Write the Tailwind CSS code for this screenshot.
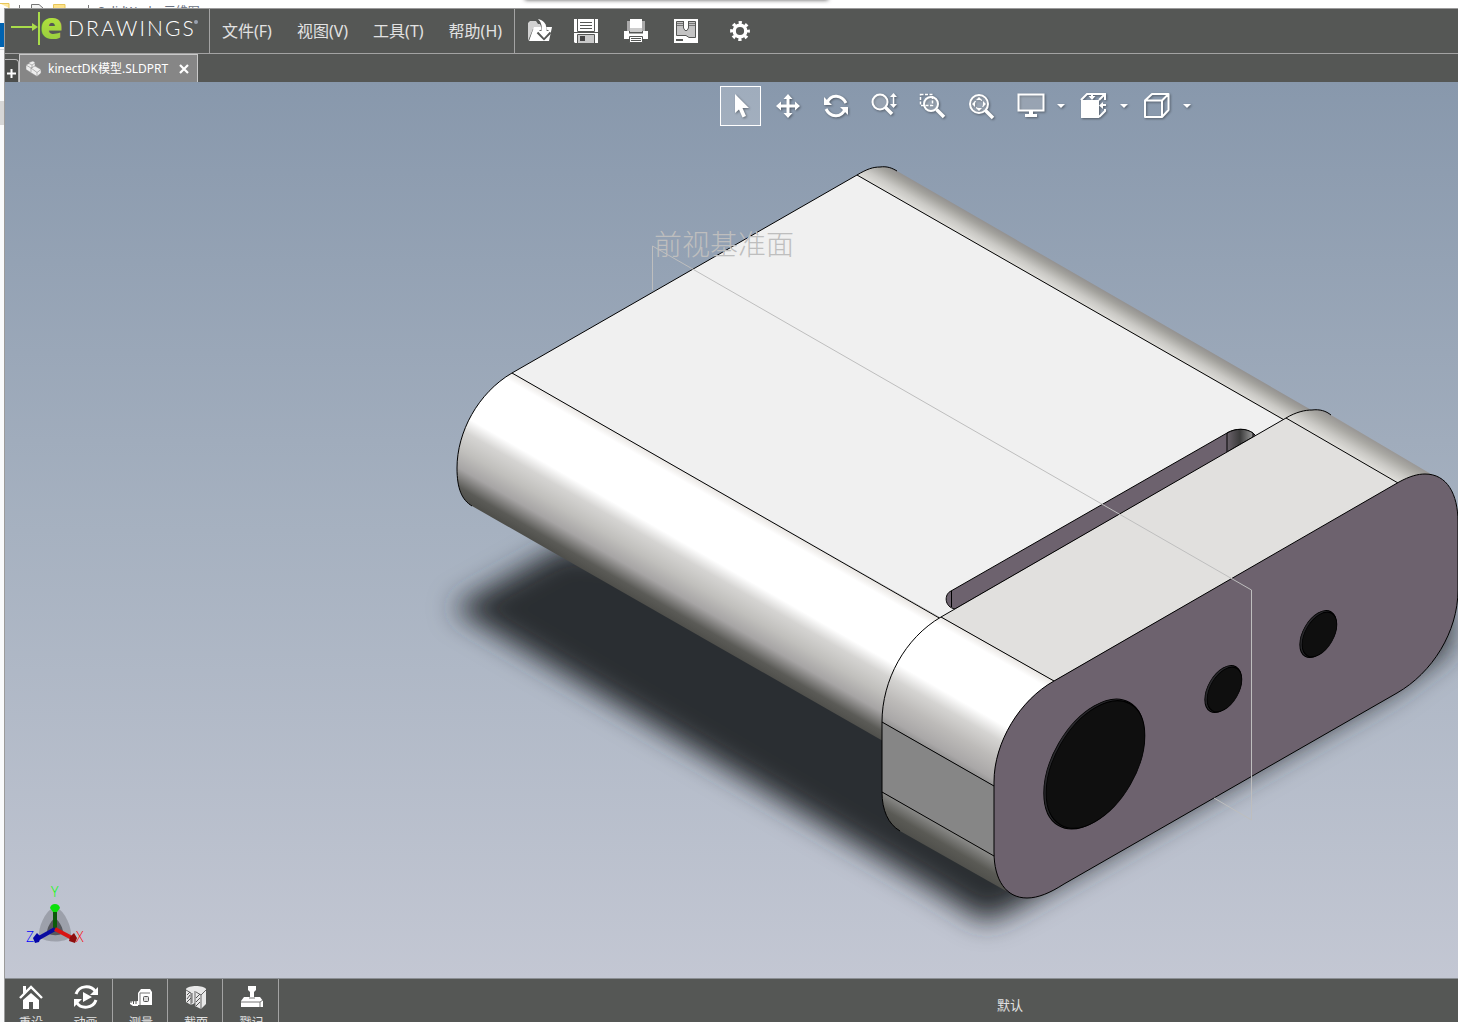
<!DOCTYPE html>
<html lang="zh-CN">
    <head>
        <meta charset="UTF-8">
        <meta name="viewport" content="width=device-width, initial-scale=1.0">
        <title>eDrawings - kinectDK模型.SLDPRT</title>
        <script src="https://cdn.jsdelivr.net/npm/@tailwindcss/browser@4"></script>
    </head>
    <body class="h-screen flex flex-col overflow-hidden bg-white text-white font-['Noto_Sans','Noto_Sans_CJK_SC',sans-serif]">
        <!-- Window behind, top edge -->
        <div class="relative h-2 shrink-0 flex overflow-hidden text-xs text-gray-500">
            <svg class="w-[92px] h-2 shrink-0" viewBox="0 0 92 8">
                <path d="M0 3.500H9V8" fill="#ffe9a2" stroke="#e8c65a"/>
                <path d="M19.500 5V8M88.500 5V8" stroke="#777"/>
                <path d="M31.500 8V4.500H39L43 8" fill="#f4f4f4" stroke="#777"/>
                <path d="M53.500 8V4.500H65V8" fill="#ffe38a" stroke="#e8c65a"/>
            </svg>
            <span class="pl-1.5 pt-1 leading-4 whitespace-nowrap">SolidWorks 三维图</span>
            <div class="absolute left-[36%] w-[303px] -top-2 h-2 bg-gray-400 shadow-[0_0_4px_#555]"></div>
        </div>

        <div class="flex-1 min-h-0 flex">
            <!-- Window behind, left edge -->
            <div class="w-1 shrink-0 bg-gray-50">
                <div class="mt-[15px] h-6 bg-[#0063b1]"></div>
                <div class="mt-0.5 h-px bg-gray-300"></div>
                <div class="mt-[51px] h-6 bg-[#d6d6d6]"></div>
            </div>

            <div class="flex-1 min-w-0 flex flex-col border-l border-t border-[#9b9b9b] bg-[#555755]">
                <header class="h-[45px] shrink-0 flex border-b border-[#a3a3a3]">
                    <div class="w-[205px] flex border-r border-[#a3a3a3]">
                        <svg class="w-[60px] h-11 shrink-0 overflow-visible" viewBox="5 9 60 44">
                            <defs>
                                <linearGradient id="lime" x1="0" y1="0" x2="0" y2="1">
                                    <stop offset="0" stop-color="#c3f03c"/>
                                    <stop offset="1" stop-color="#8fc63f"/>
                                </linearGradient>
                            </defs>
                            <path d="M11 26H32V23L38 27L32 31V28H11Z" fill="#a9dc4a"/>
                            <rect x="38" y="12" width="2" height="33" fill="#a9dc4a"/>
                            <text x="40" y="39" font-family="Open Sans" font-weight="800" font-size="37" fill="url(#lime)">e</text>
                        </svg>
                        <div class="flex items-start pt-[5px] pl-[3px] font-['Lato']">
                            <span class="text-[21px] leading-7 tracking-widest font-light">DRAWINGS</span>
                            <span class="w-1 h-1 mt-1.5 -ml-0.5 rounded-full bg-gray-400"></span>
                        </div>
                    </div>
                    <nav class="w-[305px] flex items-center gap-[25px] pl-3 border-r border-[#a3a3a3] text-base leading-5 text-[#e2e2e2] whitespace-nowrap">
                        <button>文件(F)</button>
                        <button>视图(V)</button>
                        <button>工具(T)</button>
                        <button>帮助(H)</button>
                    </nav>
                    <div class="flex items-center pl-[13px] gap-[26px]">
                        <button aria-label="打开" class="-mr-1">
                            <svg class="w-6 h-6" viewBox="0 0 24 24">
                                <path d="M0 22V4L2 2H8L10 5H18V10H5Z" fill="#d2d2d2"/>
                                <path d="M1 22L6 8H24L21 22Z" fill="#fff"/>
                                <path d="M11 1C15 3 17 7 16 17M10.500 12.500L16 18L21.500 12.500" fill="none" stroke="#555755" stroke-width="5"/>
                                <path d="M10 0C15 1 19 4 18.500 12H22.500L16 19L9.500 12H14C14 6 13 3 10 0Z" fill="#fff"/>
                            </svg>
                        </button>
                        <button aria-label="保存">
                            <svg class="w-6 h-6" viewBox="0 0 24 24">
                                <path d="M0 0H24V24H1L0 23Z" fill="#fff"/>
                                <path d="M3.500 0V12.500H20.500V0M6 3.500H18M6 6.500H18M6 9.500H18" fill="none" stroke="#555755"/>
                                <path d="M0 13.500H24" stroke="#555755"/>
                                <path d="M3.500 24V15.500H20.500V24" fill="#c9c9c9" stroke="#555755"/>
                                <rect x="6" y="17" width="5" height="5" fill="#444"/>
                            </svg>
                        </button>
                        <button aria-label="打印">
                            <svg class="w-6 h-6" viewBox="0 0 24 24">
                                <path d="M3 2H6V12H3ZM18 2H21V12H18Z" fill="#aaa"/>
                                <path d="M6 0H18V12H6Z" fill="#fff"/>
                                <path d="M6 9H18V13H6Z" fill="#ccc"/>
                                <path d="M0 12H5V14.500H19V12H24V20H0Z" fill="#fff"/>
                                <path d="M5.500 17.500H18.500V23.500H5.500Z" fill="#fff" stroke="#555755"/>
                                <path d="M7 19.500H17M7 21.500H17" stroke="#555755"/>
                            </svg>
                        </button>
                        <button aria-label="3D 打印">
                            <svg class="w-6 h-6" viewBox="0 0 24 24">
                                <path d="M0 0H24V24H0Z" fill="#fff"/>
                                <path d="M2.500 2.500H21.500V18.500H15L12 16.500H2.500Z" fill="#c4c4c4" stroke="#555755"/>
                                <path d="M3 4.500H21M3 6.500H21" stroke="#777"/>
                                <path d="M9.500 2V9L11 11.500H13L14.500 9V2" fill="#fff" stroke="#555755"/>
                                <path d="M2 21H9" stroke="#555755" stroke-width="2"/>
                            </svg>
                        </button>
                        <button aria-label="选项" class="pl-1.5">
                            <svg class="w-5 h-5" viewBox="0 0 20 20" fill="none" stroke="#fff">
                                <circle cx="10" cy="10" r="5.800" stroke-width="3.400"/>
                                <circle cx="10" cy="10" r="8.300" stroke-width="3.200" stroke-dasharray="3.200 3.319" stroke-dashoffset="1.600"/>
                            </svg>
                        </button>
                    </div>
                </header>

                <div class="h-7 shrink-0 flex items-end">
                    <button aria-label="新建标签" class="w-3.5 h-[23px] flex items-end justify-center pb-1 border-t border-r border-[#b5b5b5] rounded-tr bg-[#4c4e4c]">
                        <svg class="w-[9px] h-[9px]" viewBox="0 0 9 9"><path d="M4.500 0V9M0 4.500H9" stroke="#fff" stroke-width="2"/></svg>
                    </button>
                    <div class="w-[179px] h-7 flex items-center pl-1.5 border border-b-0 border-[#c9c9c9] bg-[#868686]">
                        <svg class="w-4 h-4 shrink-0" viewBox="0 0 16 16" stroke="#8c8c8c" stroke-width=".5">
                            <path d="M0 4L3 2.500V1.500L7 0L9 1.500V5L15 8.500V12L11 15.500L0 8.500Z" fill="#eee"/>
                            <path d="M3 2.500L6 4L9 2M0 4L5 7L9 5M5 7V11M6 4V7M5 7L11 11.500L15 8.500M11 11.500V15.500" fill="none" stroke="#777"/>
                        </svg>
                        <span class="ml-1.5 text-xs leading-5 whitespace-nowrap">kinectDK模型.SLDPRT</span>
                        <button aria-label="关闭" class="ml-auto mr-2">
                            <svg class="w-[10px] h-[10px]" viewBox="0 0 10 10"><path d="M1 1L9 9M9 1L1 9" stroke="#fff" stroke-width="2.200"/></svg>
                        </button>
                    </div>
                </div>

                <main class="relative flex-1 min-h-0 bg-linear-to-b from-[#8898ac] via-[#a6b1c0] to-[#c3c7d3]">
                    <!-- 3D view -->
                    <svg class="block w-full h-full" viewBox="5 82 1453 896" preserveAspectRatio="xMinYMin slice">
                        <defs>
                            <filter id="soft" x="-20%" y="-20%" width="140%" height="140%"><feGaussianBlur stdDeviation="14"/></filter>
                            <linearGradient id="bodySide" gradientUnits="userSpaceOnUse" x1="512" y1="373" x2="444" y2="490.800">
                                <stop offset="0" stop-color="#ebe8e5"/>
                                <stop offset=".06" stop-color="#fff"/>
                                <stop offset=".45" stop-color="#fff"/>
                                <stop offset=".55" stop-color="#d5d4d2"/>
                                <stop offset=".68" stop-color="#c0bfbc"/>
                                <stop offset=".8" stop-color="#a6a4a4"/>
                                <stop offset=".92" stop-color="#5b5b57"/>
                                <stop offset="1" stop-color="#4c4c48"/>
                            </linearGradient>
                            <linearGradient id="boxSide" gradientUnits="userSpaceOnUse" x1="941" y1="617" x2="873" y2="734.800">
                                <stop offset="0" stop-color="#ebe8e5"/>
                                <stop offset=".06" stop-color="#fff"/>
                                <stop offset=".46" stop-color="#fff"/>
                                <stop offset=".57" stop-color="#d5d4d2"/>
                                <stop offset=".7" stop-color="#bdbbb9"/>
                                <stop offset=".84" stop-color="#a9a7a7"/>
                                <stop offset=".91" stop-color="#888"/>
                            </linearGradient>
                            <linearGradient id="boxUnder" gradientUnits="userSpaceOnUse" x1="882" y1="792" x2="868" y2="816">
                                <stop offset="0" stop-color="#888886"/>
                                <stop offset=".5" stop-color="#5a5a55"/>
                                <stop offset="1" stop-color="#4c4c48"/>
                            </linearGradient>
                            <linearGradient id="bodyFar" gradientUnits="userSpaceOnUse" x1="857" y1="175" x2="869" y2="154.200">
                                <stop offset="0" stop-color="#e0dfdb"/>
                                <stop offset=".35" stop-color="#cac9c5"/>
                                <stop offset=".75" stop-color="#a3a29d"/>
                                <stop offset="1" stop-color="#92908f"/>
                            </linearGradient>
                            <linearGradient id="boxFar" gradientUnits="userSpaceOnUse" x1="1286" y1="418" x2="1298" y2="397.200">
                                <stop offset="0" stop-color="#e0dfdb"/>
                                <stop offset=".35" stop-color="#cac9c5"/>
                                <stop offset=".75" stop-color="#a9a8a3"/>
                                <stop offset="1" stop-color="#9a9896"/>
                            </linearGradient>
                            <linearGradient id="slotEnd">
                                <stop offset="0" stop-color="#6a626a"/>
                                <stop offset=".5" stop-color="#3b3b3b"/>
                                <stop offset="1" stop-color="#999"/>
                            </linearGradient>
                        </defs>

                        <!-- Floor shadow -->
                        <path d="M452 608L565 545L1000 600L1450 600V648L1392 692L1016 908L985 922L930 888Z" fill="#2c2d30" filter="url(#soft)"/>

                        <!-- Main body -->
                        <path d="M857 175C867 169 873 167 880 167C887 166 892 168 897 171L1320 415L1286 425Z" fill="url(#bodyFar)"/>
                        <path d="M512 373C478 393 457 432 457 468C457 489 462 500 472 506L890 745L941 618Z" fill="url(#bodySide)"/>
                        <path d="M512 373L857 175L1283 420L941 618Z" fill="#f0f0f0"/>
                        <path d="M472 506C462 500 457 489 457 468C457 432 478 393 512 373L857 175C867 169 873 167 880 167C887 166 892 168 897 171M512 373L941 619M857 175L1286 421" fill="none" stroke="#000"/>

                        <!-- Slot -->
                        <path d="M955 609C944 607 944 594 951 591L1227 433C1236 428 1246 428 1254 434L1256 436Z" fill="#6d626e" stroke="#000"/>
                        <path d="M1227 433C1236 428 1246 428 1253 433V437L1227 452Z" fill="url(#slotEnd)" stroke="#000"/>
                        <path d="M951.500 591V607" stroke="#000"/>

                        <!-- Sensor head -->
                        <path d="M1286 418C1296 412 1305 410 1312 410C1320 409 1326 411 1331 415L1436 477L1398 490Z" fill="url(#boxFar)"/>
                        <path d="M941 617C905 638 882 680 882 722L994 786L1054 681Z" fill="url(#boxSide)"/>
                        <path d="M994 782C994 742 1020 700 1054 681L1070 700L1010 800Z" fill="#6d626e"/>
                        <path d="M941 617L1286 418L1398 483L1054 681Z" fill="#e1e0de"/>
                        <path d="M882 722L994 786V856L882 792Z" fill="#868686"/>
                        <path d="M882 792C882 810 888 824 900 831L1006 891L994 855Z" fill="url(#boxUnder)"/>
                        <path d="M900 831C888 824 882 810 882 792V722C882 680 905 638 941 617L1286 418C1296 412 1305 410 1312 410C1320 409 1326 411 1331 415M941 617L1054 681M1286 418L1398 483M882 722L994 786M882 792L994 856" fill="none" stroke="#000"/>
                        <path d="M1054 681L1399 482C1410 476 1418 474 1425 474C1447 474 1458 494 1458 522V590C1458 632 1432 673 1397 693L1064 884C1050 893 1038 898 1027 898C1006 898 994 880 994 852V782C994 742 1020 700 1054 681Z" fill="#6d626e" stroke="#000"/>

                        <!-- Lenses -->
                        <g stroke="#000">
                            <circle r="58" fill="#27272a" transform="matrix(.866 -.5 0 1 1094 764)"/>
                            <circle r="57" fill="#0f0f0f" transform="matrix(.866 -.5 0 1 1095.500 764.500)"/>
                            <circle r="21" fill="#27272a" transform="matrix(.866 -.5 0 1 1223 689)"/>
                            <circle r="20" fill="#0f0f0f" transform="matrix(.866 -.5 0 1 1224.500 689.500)"/>
                            <circle r="21" fill="#27272a" transform="matrix(.866 -.5 0 1 1318 634)"/>
                            <circle r="20" fill="#0f0f0f" transform="matrix(.866 -.5 0 1 1319.500 634.500)"/>
                        </g>

                        <!-- Front plane -->
                        <path d="M652.500 290V246L1251.500 590V820L1214 798" fill="none" stroke="#bebebe"/>
                        <text x="654" y="255" font-family="Noto Sans CJK SC" font-weight="300" font-size="28" fill="#bebebe">前视基准面</text>

                        <!-- Axis triad -->
                        <path d="M55 906C44 912 38 928 39 937C47 943 64 943 71 937C72 928 66 912 55 906Z" fill="#000" opacity=".18"/>
                        <path d="M55 918C50 922 47 928 47 933C52 936 59 936 63 933C63 928 60 922 55 918Z" fill="#000" opacity=".45"/>
                        <path d="M55 929V911" stroke="#0b5a0b" stroke-width="4"/>
                        <path d="M50 908Q51 904 55 904Q59 904 60 908L57 912H53Z" fill="#0be00b"/>
                        <path d="M55 929L39 938" stroke="#0a0aa0" stroke-width="4"/>
                        <path d="M33 938L37 933L41 937L39 942L35 943Z" fill="#0606a8"/>
                        <path d="M55 929L72 938" stroke="#d81414" stroke-width="4"/>
                        <path d="M70 937L74 933L77 938L75 943L69 941Z" fill="#8f0d0d"/>
                        <g font-family="Open Sans" font-size="14" font-weight="300">
                            <text x="51" y="897" fill="#0f0">Y</text>
                            <text x="26" y="942" fill="#00f">Z</text>
                            <text x="76" y="942" fill="#f00">X</text>
                        </g>
                    </svg>

                    <!-- View toolbar -->
                    <div class="absolute top-1 left-[715px] flex items-center gap-[7px] [&_svg]:drop-shadow-[1px_1px_1px_#0006]">
                        <button aria-label="选择" class="w-[41px] h-10 flex items-center justify-center border border-white bg-white/20">
                            <svg class="w-7 h-7" viewBox="0 0 28 28"><path d="M8 2V21L12 17.500L15.500 25.500L19 24L15.500 16H22Z" fill="#fff"/></svg>
                        </button>
                        <button aria-label="平移" class="w-10 mr-px h-10 flex items-center justify-center">
                            <svg class="w-7 h-7" viewBox="0 0 28 28">
                                <path d="M14 6V22M6 14H22" stroke="#fff" stroke-width="3"/>
                                <path d="M14 2L18.500 7H9.500ZM14 26L18.500 21H9.500ZM2 14L7 9.500V18.500ZM26 14L21 9.500V18.500Z" fill="#fff"/>
                            </svg>
                        </button>
                        <button aria-label="旋转" class="w-10 mr-px h-10 flex items-center justify-center">
                            <svg class="w-7 h-7" viewBox="0 0 28 28">
                                <path d="M5 11C9 1 20 3 24 11M23 17C19 27 8 25 4 17" fill="none" stroke="#fff" stroke-width="3"/>
                                <path d="M2 5V13H10ZM26 23V15H18Z" fill="#fff"/>
                            </svg>
                        </button>
                        <button aria-label="缩放" class="w-10 mr-px h-10 flex items-center justify-center">
                            <svg class="w-7 h-7" viewBox="0 0 28 28">
                                <circle cx="10" cy="10" r="7.500" fill="#fff3" stroke="#fff" stroke-width="2"/>
                                <path d="M15.500 15.500L22 22" stroke="#fff" stroke-width="3.500"/>
                                <path d="M23.500 4V14" stroke="#fff" stroke-width="1.500"/>
                                <path d="M23.500 1L27 5H20ZM23.500 16L27 12H20Z" fill="#fff"/>
                            </svg>
                        </button>
                        <button aria-label="局部放大" class="w-10 mr-px h-10 flex items-center justify-center">
                            <svg class="w-7 h-7" viewBox="0 0 28 28">
                                <path d="M2.500 2.500H14.500V13.500H2.500Z" fill="none" stroke="#fff" stroke-width="1.500" stroke-dasharray="3 1.500"/>
                                <circle cx="13" cy="12" r="7" fill="#fff3" stroke="#fff" stroke-width="2"/>
                                <path d="M18.500 17.500L26 25" stroke="#fff" stroke-width="3.500"/>
                            </svg>
                        </button>
                        <button aria-label="整屏显示" class="w-[41px] h-10 flex items-center justify-center">
                            <svg class="w-7 h-7" viewBox="0 0 28 28">
                                <circle cx="12" cy="12" r="9" fill="#fff3" stroke="#fff" stroke-width="2"/>
                                <path d="M12 5L15 8H9ZM12 19L15 16H9ZM5 12L8 9V15ZM19 12L16 9V15Z" fill="#fff"/>
                                <circle cx="12" cy="12" r="4.500" fill="none" stroke="#fff" stroke-dasharray="3 4"/>
                                <path d="M18.500 18.500L26 26" stroke="#fff" stroke-width="3.500"/>
                            </svg>
                        </button>
                        <div class="flex pl-0.5 gap-[3px]">
                            <div class="flex">
                                <button aria-label="显示" class="w-[41px] h-10 flex items-center justify-center">
                                    <svg class="w-7 h-7" viewBox="0 0 28 28">
                                        <path d="M1.500 2.500H26.500V18.500H1.500Z" fill="#fff3" stroke="#fff" stroke-width="2"/>
                                        <path d="M12 19H16V22H20V25H8V22H12Z" fill="#fff"/>
                                    </svg>
                                </button>
                                <button aria-label="显示选项" class="w-5 flex items-center justify-center">
                                    <svg class="w-2 h-1" viewBox="0 0 8 4"><path d="M0 0H8L4 4Z" fill="#fff"/></svg>
                                </button>
                            </div>
                            <div class="flex -ml-px">
                                <button aria-label="视图方向" class="w-[41px] h-10 flex items-center justify-center">
                                    <svg class="w-7 h-7" viewBox="0 0 28 28">
                                        <path d="M1 8H19V26H1Z" fill="#fff"/>
                                        <path d="M1 8L7 2H25V8M25 17V19L19 25" fill="none" stroke="#fff" stroke-width="2"/>
                                        <path d="M19 8L25 2M12 1V5M26 13H22" stroke="#fff" stroke-width="2"/>
                                        <path d="M12 8L8.500 4H15.500ZM19 13.500L23 10V17Z" fill="#fff"/>
                                    </svg>
                                </button>
                                <button aria-label="视图方向选项" class="w-5 flex items-center justify-center">
                                    <svg class="w-2 h-1" viewBox="0 0 8 4"><path d="M0 0H8L4 4Z" fill="#fff"/></svg>
                                </button>
                            </div>
                            <div class="flex -ml-px">
                                <button aria-label="显示样式" class="w-[41px] h-10 flex items-center justify-center">
                                    <svg class="w-7 h-7" viewBox="0 0 28 28" fill="none" stroke="#fff" stroke-width="2" stroke-linejoin="round">
                                        <path d="M2 8.500H19V25H2ZM2 8.500L9 2H25.500L19 8.500M25.500 2V18L19 25"/>
                                    </svg>
                                </button>
                                <button aria-label="显示样式选项" class="w-5 flex items-center justify-center">
                                    <svg class="w-2 h-1" viewBox="0 0 8 4"><path d="M0 0H8L4 4Z" fill="#fff"/></svg>
                                </button>
                            </div>
                        </div>
                    </div>
                </main>

                <footer class="h-11 shrink-0 flex overflow-hidden border-t border-[#8b8f94] text-xs leading-4 text-[#e2e2e2]">
                    <button class="w-[52px] pt-1.5 flex flex-col items-center gap-1.5">
                        <svg class="w-6 h-6 shrink-0" viewBox="0 0 24 24">
                            <path d="M4 1H7V6L4 9ZM12 8L20 15V24H14V17H10V24H4V15Z" fill="#fff"/>
                            <path d="M1 13L12 2L23 13" fill="none" stroke="#fff" stroke-width="2.400"/>
                            <path d="M2 15L12 5L22 15" fill="none" stroke="#555755"/>
                        </svg>
                        重设
                    </button>
                    <button class="w-14 pt-1.5 pl-0.5 flex flex-col items-center gap-1.5 border-r border-[#a3a3a3]">
                        <svg class="w-6 h-6 shrink-0" viewBox="0 0 24 24">
                            <path d="M2 9C5 0 17 0 21 6M22 15C19 24 7 24 3 18" fill="none" stroke="#fff" stroke-width="3"/>
                            <path d="M24 2V10H16ZM0 22V14H8ZM9 7L18 12L9 17Z" fill="#fff"/>
                        </svg>
                        动画
                    </button>
                    <button class="w-[55px] pt-1.5 pl-0.5 flex flex-col items-center gap-1.5 border-r border-[#a3a3a3]">
                        <svg class="w-6 h-6 shrink-0" viewBox="0 0 24 24">
                            <path d="M9 8L12 4H21L23 7V20H9Z" fill="#fff"/>
                            <path d="M11 8H21M11 8V20" stroke="#777" fill="none"/>
                            <rect x="14.500" y="11.500" width="5" height="5" rx="1" fill="#ddd" stroke="#555"/>
                            <path d="M9 16L1 16.500V19L4 21H9Z" fill="#fff"/>
                            <path d="M2 18V16M4.500 19V16M7 19V16" stroke="#555755"/>
                        </svg>
                        测量
                    </button>
                    <button class="w-[55px] pt-1.5 pl-0.5 flex flex-col items-center gap-1.5 border-r border-[#a3a3a3]">
                        <svg class="w-6 h-6 shrink-0" viewBox="0 0 24 24">
                            <path d="M2 4C4 0 20 0 22 4V19L17 24L11 21V18L7 20L2 17Z" fill="#e8e8e8"/>
                            <path d="M2 5L7 8V20M8 8V18M11 6V21M12 7L17 10V24M17 10L22 5" fill="none" stroke="#666"/>
                            <path d="M3 10L6 7M3 14L6 10M3 17L7 13M12 13L16 9M12 17L16 13M12 21L16 17" stroke="#555"/>
                        </svg>
                        截面
                    </button>
                    <button class="w-14 pt-1.5 pl-0.5 flex flex-col items-center gap-1.5 border-r border-[#a3a3a3]">
                        <svg class="w-6 h-6 shrink-0" viewBox="0 0 24 24">
                            <path d="M8 1H16V5L14 7V13H10V7L8 5Z" fill="#fff"/>
                            <path d="M4 12H20L23 16V22H1V16Z" fill="#fff"/>
                            <path d="M1 17H20L23 15M20 17V22M9 13H15" stroke="#777" fill="none"/>
                        </svg>
                        戳记
                    </button>
                    <span class="ml-auto mr-[435px] pt-[18px] text-[13px] whitespace-nowrap">默认</span>
                </footer>
            </div>
        </div>
    </body>
</html>
